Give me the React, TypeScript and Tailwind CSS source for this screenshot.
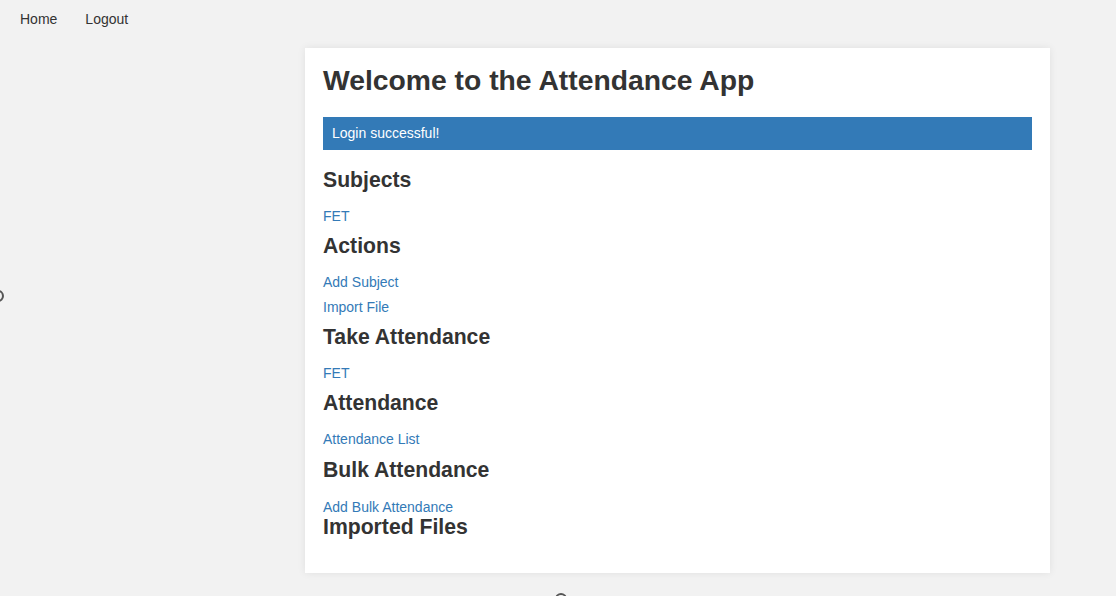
import React from "react";

interface SectionProps {
  title: string;
  links: string[];
  first?: boolean;
}

const Section: React.FC<SectionProps> = ({ title, links, first }) => (
  <div className={first ? "mt-[17px]" : "mt-[4px]"}>
    <h2 className="text-[21.2px] font-bold leading-[26px] text-[#333]">{title}</h2>
    <ul className="mt-[11px] text-[14px]">
      {links.map((l) => (
        <li key={l} className="text-[14px] leading-[25px]">
          <a href="#" className="text-[#337ab7]">
            {l}
          </a>
        </li>
      ))}
    </ul>
  </div>
);

export default function App() {
  return (
    <div
      className="relative h-[596px] w-full overflow-hidden bg-[#f2f2f2] text-[#333]"
      style={{ fontFamily: '"Liberation Sans", Arial, sans-serif' }}
    >
      {/* Top nav */}
      <nav className="flex h-[38px] items-center gap-[28px] pl-[20px] text-[14px]">
        <a href="#">Home</a>
        <a href="#">Logout</a>
      </nav>

      {/* Main card */}
      <div className="ml-[305px] mt-[10px] w-[745px] bg-white px-[18px] pt-[14px] pb-[33px] shadow-[0_0_8px_rgba(0,0,0,0.08)]">
        <h1 className="text-[28.3px] font-bold leading-[36px]">Welcome to the Attendance App</h1>
        <div className="mt-[19px] bg-[#337ab7] px-[9px] py-[8px] text-[14px] leading-[17px] text-white">
          Login successful!
        </div>

        <Section title="Subjects" links={["FET"]} first />
        <Section title="Actions" links={["Add Subject", "Import File"]} />
        <Section title="Take Attendance" links={["FET"]} />
        <Section title="Attendance" links={["Attendance List"]} />

        <div className="mt-[5px]">
          <h2 className="text-[21.2px] font-bold leading-[26px]">Bulk Attendance</h2>
          <a href="#" className="mt-[14px] block text-[14px] leading-[20px] text-[#337ab7]">
            Add Bulk Attendance
          </a>
        </div>
        <h2 className="mt-[-3px] text-[21.2px] font-bold leading-[26px]">Imported Files</h2>
      </div>

      {/* stray rings at page edges */}
      <div className="absolute left-[-8px] top-[290px] h-[12px] w-[12px] rounded-full border-2 border-[#555]" />
      <div className="absolute left-[555px] top-[593px] h-[12px] w-[12px] rounded-full border-2 border-[#555]" />
    </div>
  );
}
